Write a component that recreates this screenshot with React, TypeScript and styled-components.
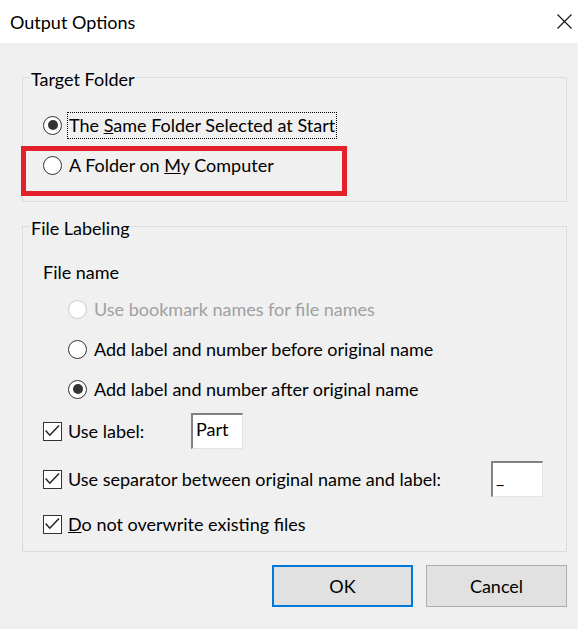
import React from "react";
import styled, { createGlobalStyle } from "styled-components";

const FONT = `Lato, "Noto Sans", "Liberation Sans", sans-serif`;

const GlobalStyle = createGlobalStyle`
  html, body { margin: 0; padding: 0; background: #f0f0f0; }
  body { font-family: ${FONT}; }
`;

const Window = styled.div`
  width: 578px;
  height: 629px;
  background: #f0f0f0;
  display: flex;
  flex-direction: column;
  font-family: ${FONT};
  font-size: 18px;
  color: #000;
  overflow: hidden;
`;

const TitleBar = styled.div`
  height: 43px;
  flex: none;
  background: #fff;
  display: flex;
  align-items: center;
  justify-content: space-between;
  padding: 0 6px 0 10px;
  box-sizing: border-box;
`;

const Title = styled.div`
  font-size: 18px;
  line-height: 22px;
`;

const CloseButton = styled.div`
  width: 15px;
  height: 15px;
  display: flex;
  align-items: center;
  justify-content: center;
`;

const Body = styled.div`
  display: flex;
  flex-direction: column;
  padding: 21px 11px 0 22px;
`;

const Group = styled.fieldset<{ $mt?: number }>`
  margin: ${(p) => p.$mt ?? 0}px 0 0 0;
  padding: 0;
  border: 1px solid #dcdcdc;
  min-width: 0;
`;

const Legend = styled.legend`
  margin-left: 7px;
  padding: 4px 1px 0 1px;
  line-height: 22px;
  font-size: 18px;
`;

const Content = styled.div<{ $pt: number; $pb: number }>`
  display: flex;
  flex-direction: column;
  gap: 12px;
  padding: ${(p) => p.$pt}px 0 ${(p) => p.$pb}px 20px;
`;

const SubHeading = styled.div`
  line-height: 22px;
`;

const Indented = styled.div`
  display: flex;
  flex-direction: column;
  gap: 12px;
  padding-left: 25px;
`;

const Row = styled.div<{ $h?: number; $mt?: number }>`
  position: relative;
  display: flex;
  align-items: center;
  height: ${(p) => p.$h ?? 28}px;
  margin-top: ${(p) => p.$mt ?? 0}px;
`;

const RadioCircle = styled.span<{ $checked?: boolean; $disabled?: boolean }>`
  width: 19px;
  height: 19px;
  box-sizing: border-box;
  border-radius: 50%;
  border: 1px solid ${(p) => (p.$disabled ? "#cccccc" : "#333333")};
  background: #fff;
  display: flex;
  align-items: center;
  justify-content: center;
  flex: none;
  &::after {
    content: "";
    display: ${(p) => (p.$checked ? "block" : "none")};
    width: 10px;
    height: 10px;
    border-radius: 50%;
    background: #333;
  }
`;

const RadioText = styled.span<{ $focused?: boolean; $disabled?: boolean }>`
  margin-left: 5px;
  height: 27px;
  box-sizing: border-box;
  display: inline-flex;
  align-items: center;
  padding: 0 1px;
  border: 1px ${(p) => (p.$focused ? "dotted #000" : "solid transparent")};
  color: ${(p) => (p.$disabled ? "#a0a0a0" : "#000")};
  white-space: nowrap;
`;

const LabelText = styled.span`
  white-space: pre;
`;

const CheckBox = styled.span`
  width: 19px;
  height: 19px;
  box-sizing: border-box;
  border: 1px solid #333;
  background: #fff;
  flex: none;
  display: flex;
  align-items: center;
  justify-content: center;
`;

const CheckLabel = styled.span<{ $w?: number }>`
  margin-left: 6px;
  width: ${(p) => (p.$w ? `${p.$w}px` : "auto")};
  white-space: nowrap;
  flex: none;
`;

const TextInput = styled.div`
  width: 52px;
  height: 36px;
  box-sizing: border-box;
  background: #fff;
  border-style: solid;
  border-width: 2px 1px 1px 2px;
  border-color: #828282 #e3e3e3 #e3e3e3 #828282;
  padding: 3px 0 0 3px;
  line-height: 22px;
  flex: none;
`;

const Highlight = styled.div`
  position: absolute;
  left: -22px;
  top: -5px;
  width: 326px;
  height: 50px;
  box-sizing: border-box;
  border: 5px solid #e4202a;
  pointer-events: none;
`;

const ButtonRow = styled.div`
  display: flex;
  justify-content: flex-end;
  gap: 13px;
  margin-top: 13px;
`;

const Button = styled.div<{ $default?: boolean }>`
  width: 141px;
  height: 42px;
  box-sizing: border-box;
  background: #e1e1e1;
  border: ${(p) => (p.$default ? "2px solid #0078d7" : "1px solid #adadad")};
  display: flex;
  align-items: center;
  justify-content: center;
  font-size: 18px;
`;

const Check = () => (
  <svg width="17" height="17" viewBox="0 0 17 17">
    <polyline points="1.6,7.6 5.8,12.2 15,2.6" fill="none" stroke="#222" strokeWidth="1.5" />
  </svg>
);

const Radio = ({
  label,
  checked,
  disabled,
  focused,
}: {
  label: React.ReactNode;
  checked?: boolean;
  disabled?: boolean;
  focused?: boolean;
}) => (
  <>
    <RadioCircle $checked={checked} $disabled={disabled} />
    <RadioText $focused={focused} $disabled={disabled}>
      <LabelText>{label}</LabelText>
    </RadioText>
  </>
);

export default function App() {
  return (
    <>
      <GlobalStyle />
      <Window>
        <TitleBar>
          <Title>Output Options</Title>
          <CloseButton>
            <svg width="15" height="15" viewBox="0 0 15 15">
              <path d="M0.5 0.5 L14.5 14.5 M14.5 0.5 L0.5 14.5" stroke="#111" strokeWidth="1.1" />
            </svg>
          </CloseButton>
        </TitleBar>
        <Body>
          <Group>
            <Legend>Target Folder</Legend>
            <Content $pt={21} $pb={22}>
              <Row>
                <Radio
                  checked
                  focused
                  label={
                    <>
                      The <u>S</u>ame Folder Selected at Start
                    </>
                  }
                />
              </Row>
              <Row>
                <Radio
                  label={
                    <>
                      A Folder on <u>M</u>y Computer
                    </>
                  }
                />
                <Highlight />
              </Row>
            </Content>
          </Group>
          <Group $mt={11}>
            <Legend>File Labeling</Legend>
            <Content $pt={22} $pb={13}>
              <SubHeading>File name</SubHeading>
              <Indented>
                <Row>
                  <Radio disabled label="Use bookmark names for file names" />
                </Row>
                <Row>
                  <Radio label="Add label and number before original name" />
                </Row>
                <Row>
                  <Radio checked label="Add label and number after original name" />
                </Row>
              </Indented>
              <Row $h={36} $mt={-2}>
                <CheckBox>
                  <Check />
                </CheckBox>
                <CheckLabel $w={123}>Use label:</CheckLabel>
                <TextInput>Part</TextInput>
              </Row>
              <Row $h={36}>
                <CheckBox>
                  <Check />
                </CheckBox>
                <CheckLabel $w={423}>Use separator between original name and label:</CheckLabel>
                <TextInput>_</TextInput>
              </Row>
              <Row $mt={1}>
                <CheckBox>
                  <Check />
                </CheckBox>
                <CheckLabel>
                  <u>D</u>o not overwrite existing files
                </CheckLabel>
              </Row>
            </Content>
          </Group>
          <ButtonRow>
            <Button $default>OK</Button>
            <Button>Cancel</Button>
          </ButtonRow>
        </Body>
      </Window>
    </>
  );
}
